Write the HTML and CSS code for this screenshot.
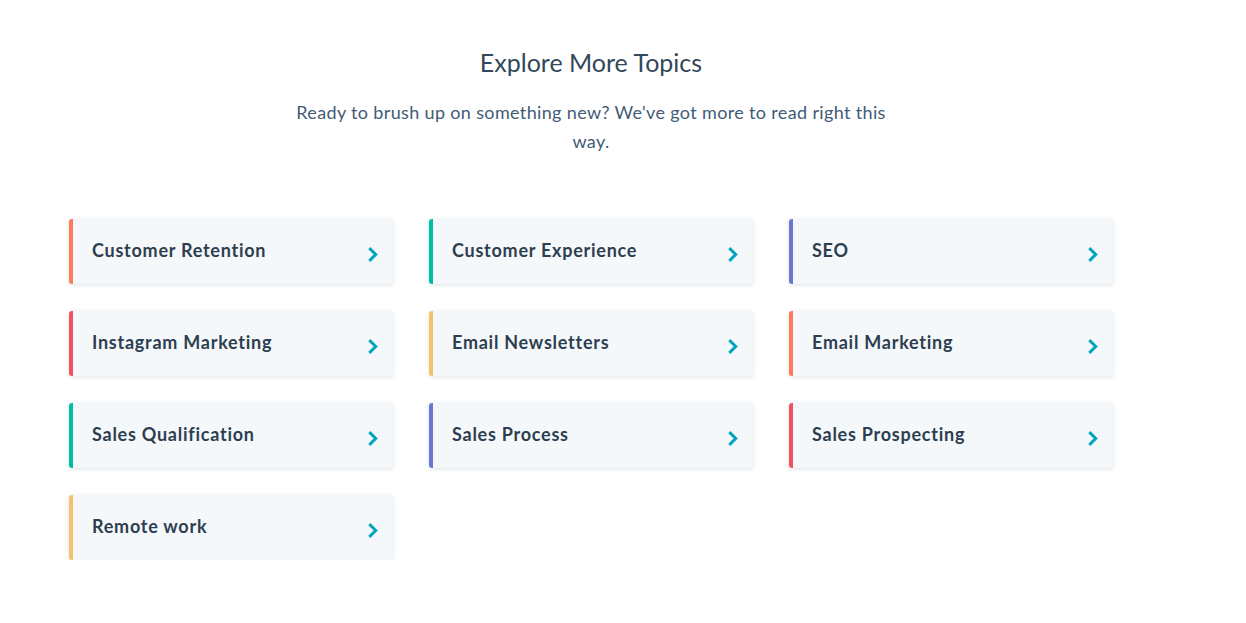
FILE: index.html
```html
<!DOCTYPE html>
<html lang="en">
<head>
<meta charset="utf-8">
<title>Explore More Topics</title>
<link rel="stylesheet" href="styles.css">
</head>
<body>
<section class="topics">
  <h2 class="topics-title">Explore More Topics</h2>
  <p class="topics-sub">Ready to brush up on something new? We've got more to read right this way.</p>
  <div class="topics-grid">
    <a class="card c-orange" href="#"><span>Customer Retention</span><svg class="chev" viewBox="0 0 10 16"><polyline points="2,2 8,8 2,14"/></svg></a>
    <a class="card c-teal" href="#"><span>Customer Experience</span><svg class="chev" viewBox="0 0 10 16"><polyline points="2,2 8,8 2,14"/></svg></a>
    <a class="card c-purple" href="#"><span>SEO</span><svg class="chev" viewBox="0 0 10 16"><polyline points="2,2 8,8 2,14"/></svg></a>
    <a class="card c-red" href="#"><span>Instagram Marketing</span><svg class="chev" viewBox="0 0 10 16"><polyline points="2,2 8,8 2,14"/></svg></a>
    <a class="card c-yellow" href="#"><span>Email Newsletters</span><svg class="chev" viewBox="0 0 10 16"><polyline points="2,2 8,8 2,14"/></svg></a>
    <a class="card c-orange" href="#"><span>Email Marketing</span><svg class="chev" viewBox="0 0 10 16"><polyline points="2,2 8,8 2,14"/></svg></a>
    <a class="card c-teal" href="#"><span>Sales Qualification</span><svg class="chev" viewBox="0 0 10 16"><polyline points="2,2 8,8 2,14"/></svg></a>
    <a class="card c-purple" href="#"><span>Sales Process</span><svg class="chev" viewBox="0 0 10 16"><polyline points="2,2 8,8 2,14"/></svg></a>
    <a class="card c-red" href="#"><span>Sales Prospecting</span><svg class="chev" viewBox="0 0 10 16"><polyline points="2,2 8,8 2,14"/></svg></a>
    <a class="card c-yellow" href="#"><span>Remote work</span><svg class="chev" viewBox="0 0 10 16"><polyline points="2,2 8,8 2,14"/></svg></a>
  </div>
</section>
</body>
</html>
```
FILE: styles.css
```css
* { box-sizing: border-box; }
body {
  margin: 0;
  background: #fff;
  font-family: Lato, "Open Sans", sans-serif;
  color: #33475b;
}
.topics {
  width: 1182px;
  padding: 46px 69px 0;
  display: flex;
  flex-direction: column;
  align-items: center;
}
.topics-title {
  margin: 0;
  font-size: 25px;
  font-weight: 400;
  line-height: 32px;
  color: #33475b;
}
.topics-sub {
  margin: 20px 0 0;
  max-width: 605px;
  text-align: center;
  font-size: 18px;
  line-height: 29px;
  letter-spacing: 0.35px;
  color: #425b76;
  font-weight: 400;
}
.topics-grid {
  margin-top: 63px;
  width: 100%;
  display: grid;
  grid-template-columns: repeat(3, 324px);
  column-gap: 36px;
  row-gap: 27px;
}
.card {
  height: 65px;
  display: flex;
  align-items: center;
  justify-content: space-between;
  padding: 0 15px 0 19px;
  background: #f5f8fa;
  border-left: 4px solid;
  border-radius: 3px;
  box-shadow: 0 1px 4px rgba(45, 62, 80, 0.16);
  text-decoration: none;
  color: #2d3e50;
  font-size: 18px;
  letter-spacing: 0.75px;
  font-weight: 700;
}
.card span { margin-top: -3px; }
.chev {
  width: 11px;
  height: 17px;
  margin-top: 6px;
  fill: none;
  stroke: #00a4bd;
  stroke-width: 2.8;
}
.c-orange { border-left-color: #ff7a59; }
.c-teal { border-left-color: #00bda5; }
.c-purple { border-left-color: #6a78d1; }
.c-red { border-left-color: #f2545b; }
.c-yellow { border-left-color: #f5c26b; }
```
